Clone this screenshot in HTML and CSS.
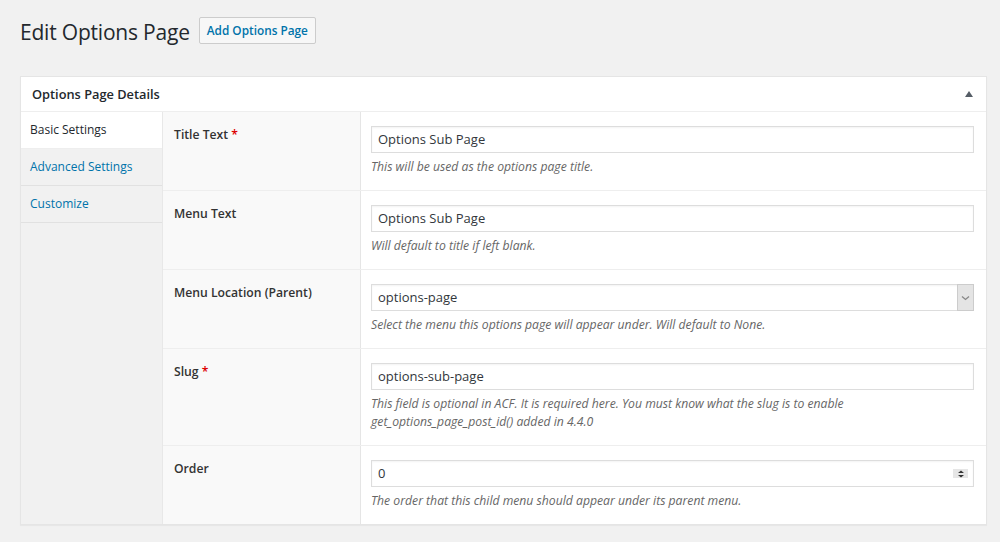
FILE: index.html
```html
<!DOCTYPE html>
<html>
<head>
<meta charset="utf-8">
<link rel="stylesheet" href="styles.css">
</head>
<body>
<div class="wrap">
  <div class="page-head">
    <h1 class="page-title">Edit Options Page</h1>
    <a class="page-action">Add Options Page</a>
  </div>
  <div class="postbox">
    <div class="postbox-head">
      <h2 class="postbox-title">Options Page Details</h2>
      <span class="toggle-arrow"></span>
    </div>
    <div class="postbox-body">
      <ul class="tabs">
        <li class="tab active">Basic Settings</li>
        <li class="tab">Advanced Settings</li>
        <li class="tab">Customize</li>
      </ul>
      <div class="fields">
        <div class="field">
          <div class="field-label">Title Text <span class="req">*</span></div>
          <div class="field-input">
            <div class="input">Options Sub Page</div>
            <p class="desc">This will be used as the options page title.</p>
          </div>
        </div>
        <div class="field">
          <div class="field-label">Menu Text</div>
          <div class="field-input">
            <div class="input">Options Sub Page</div>
            <p class="desc">Will default to title if left blank.</p>
          </div>
        </div>
        <div class="field">
          <div class="field-label">Menu Location (Parent)</div>
          <div class="field-input">
            <div class="input select">options-page<span class="select-btn"><svg width="9" height="6" viewBox="0 0 9 6"><path d="M1 1.5 L4.5 4.5 L8 1.5" fill="none" stroke="#888" stroke-width="1.3"/></svg></span></div>
            <p class="desc">Select the menu this options page will appear under. Will default to None.</p>
          </div>
        </div>
        <div class="field">
          <div class="field-label">Slug <span class="req">*</span></div>
          <div class="field-input">
            <div class="input">options-sub-page</div>
            <p class="desc">This field is optional in ACF. It is required here. You must know what the slug is to enable<br>get_options_page_post_id() added in 4.4.0</p>
          </div>
        </div>
        <div class="field last">
          <div class="field-label">Order</div>
          <div class="field-input">
            <div class="input number">0<span class="spin"><svg width="10" height="8" viewBox="0 0 10 8"><path d="M5 0.5 L8 3 L2 3 Z M5 7.5 L8 5 L2 5 Z" fill="#333"/></svg></span></div>
            <p class="desc">The order that this child menu should appear under its parent menu.</p>
          </div>
        </div>
      </div>
    </div>
  </div>
</div>
</body>
</html>
```

FILE: styles.css
```css
* { box-sizing: border-box; }
html, body { margin: 0; padding: 0; }
body {
  background: #f1f1f1;
  font-family: "Open Sans", "Noto Sans", sans-serif;
  color: #23282d;
  width: 1000px;
  height: 542px;
  overflow: hidden;
}
.wrap { padding: 14px 14px 0 20px; }
.page-head { display: flex; align-items: center; gap: 9px; height: 35px; }
.page-title {
  margin: 0;
  font-size: 21px;
  font-weight: 400;
  letter-spacing: -0.2px;
  color: #23282d;
}
.page-action {
  display: inline-block;
  height: 27px;
  line-height: 25px;
  padding: 0 7px;
  border: 1px solid #ccc;
  border-radius: 2px;
  background: #f7f7f7;
  color: #0073aa;
  font-size: 11.8px;
  font-weight: 600;
  margin-top: -2px;
}
.postbox {
  margin-top: 27px;
  background: #fff;
  border: 1px solid #e5e5e5;
  box-shadow: 0 1px 1px rgba(0,0,0,0.04);
  width: 967px;
}
.postbox-head {
  height: 35px;
  display: flex;
  align-items: center;
  justify-content: space-between;
  padding: 0 13px 0 11px;
  border-bottom: 1px solid #eee;
}
.postbox-title { margin: 0; font-size: 12.8px; font-weight: 600; color: #23282d; }
.toggle-arrow {
  width: 0; height: 0;
  border-left: 4.5px solid transparent;
  border-right: 4.5px solid transparent;
  border-bottom: 6px solid #555d66;
}
.postbox-body { display: flex; }
.tabs {
  list-style: none;
  margin: 0; padding: 0;
  width: 142px;
  background: #f1f1f1;
  border-right: 1px solid #e8e8e8;
  flex: none;
}
.tab {
  height: 37px;
  line-height: 36px;
  padding: 0 9px;
  font-size: 12px;
  color: #0073aa;
  border-bottom: 1px solid #e1e1e1;
}
.tab.active { background: #fff; color: #23282d; border-bottom-color: #eee; height: 37px; }
.fields { flex: 1; }
.field { display: flex; border-bottom: 1px solid #eee; }
.field.last { border-bottom: 0; }
.field-label {
  width: 198px;
  flex: none;
  background: #f9f9f9;
  border-right: 1px solid #e5e5e5;
  padding: 14px 11px;
  font-size: 12.2px;
  font-weight: 600;
  line-height: 18px;
  color: #333;
}
.req { color: #d00; }
.field-input { flex: 1; padding: 14px 12px 14px 10px; }
.input {
  position: relative;
  height: 27px;
  line-height: 25px;
  border: 1px solid #ddd;
  box-shadow: inset 0 1px 2px rgba(0,0,0,0.05);
  padding: 0 6px;
  font-size: 13px;
  color: #32373c;
  background: #fff;
}
.select-btn {
  position: absolute;
  right: -1px; top: -1px;
  width: 17px; height: 27px;
  background: #e4e4e4;
  border: 1px solid #ccc;
  display: flex; align-items: center; justify-content: center;
}
.spin {
  position: absolute;
  right: 5px; top: 8px;
  width: 15px; height: 9px;
  background: #e6e6e6;
  display: flex; align-items: center; justify-content: center;
}
.desc {
  margin: 5px 0 0;
  font-size: 12.2px;
  font-style: italic;
  color: #666;
  line-height: 18px;
}
```
